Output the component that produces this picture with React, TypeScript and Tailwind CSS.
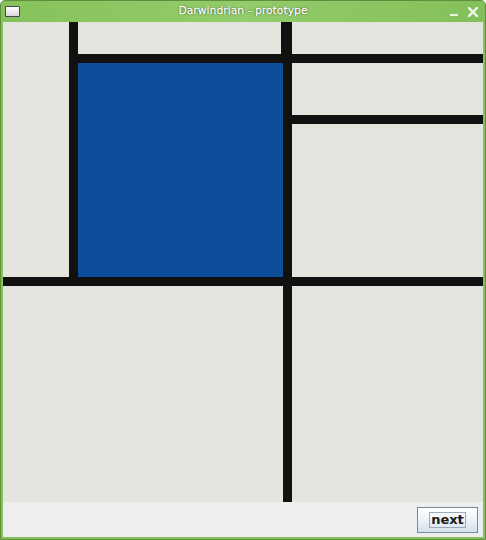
import React from "react";

export default function App() {
  return (
    <div className="w-[486px] h-[540px] flex flex-col bg-[#86c25c] rounded-t-[5px] border border-[#5f8f3c] overflow-hidden" style={{ fontFamily: '"DejaVu Sans", sans-serif' }}>
      <div className="relative h-[21px] flex items-center justify-center bg-gradient-to-r from-[#86c25c] via-[#93cc6a] to-[#84c05a]">
        <div className="absolute left-[4px] top-[5px] w-[15px] h-[11px] border border-[#3f4a52] bg-gradient-to-b from-white to-[#d8d8d8] rounded-[1px]" />
        <span className="text-[10.8px] font-normal text-white [text-shadow:0_0_1px_#2f5a15,0_0_1px_#2f5a15,0_0_2px_#3f6a20] [-webkit-text-stroke:0.3px_white]">Darwindrian - prototype</span>
        <div className="absolute right-[27px] top-[13px] w-[8px] h-[2px] bg-[#eef6e8]" />
        <svg className="absolute right-[7px] top-[6px]" width="10" height="10" viewBox="0 0 10 10">
          <path d="M1 1 L9 9 M9 1 L1 9" stroke="#eef6e8" strokeWidth="2.4" strokeLinecap="square" />
        </svg>
      </div>
      <div className="flex-1 flex flex-col px-[2px] pb-[2px]">
        <svg width="480" height="480" viewBox="0 0 480 480" className="block shrink-0">
          <rect x="0" y="0" width="480" height="480" fill="#e4e4df" />
          <rect x="75" y="41" width="205" height="215" fill="#0d4e9b" />
          <rect x="66" y="0" width="9" height="264" fill="#111111" />
          <rect x="66" y="32" width="414" height="9" fill="#111111" />
          <rect x="278" y="0" width="11" height="32" fill="#111111" />
          <rect x="280" y="32" width="9" height="448" fill="#111111" />
          <rect x="289" y="93" width="191" height="9" fill="#111111" />
          <rect x="0" y="255" width="480" height="9" fill="#111111" />
        </svg>
        <div className="flex-1 bg-[#eeeeee] flex items-start justify-end pt-[5px] pr-[5px]">
          <button className="w-[61px] h-[26px] border border-[#7a8a99] bg-gradient-to-b from-white via-[#edf2f7] to-[#d3e0ee] flex items-center justify-center">
            <span className="px-[1px] leading-[14px] border border-[#9aaabb] text-[13px] font-bold text-[#1a1a1a]">next</span>
          </button>
        </div>
      </div>
    </div>
  );
}
